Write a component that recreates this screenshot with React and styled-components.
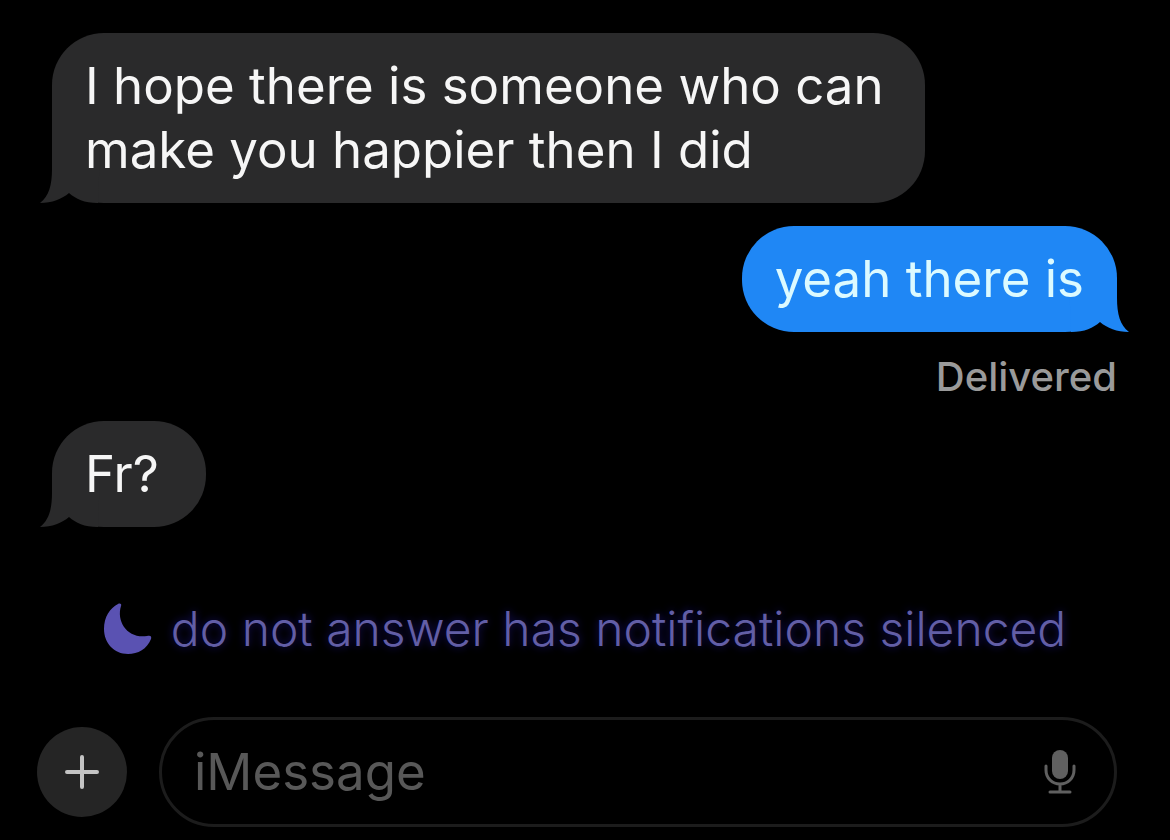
import styled, { createGlobalStyle } from 'styled-components'
import { useState } from 'react'

const GlobalStyle = createGlobalStyle`
  * {
    box-sizing: border-box;
  }

  body {
    margin: 0;
    background-color: #000;
    font-family: Inter, "Liberation Sans", sans-serif;
  }
`

const Screen = styled.main`
  display: flex;
  flex-direction: column;
  padding: 33px 53px 14px 52px;
`

const Thread = styled.div`
  display: flex;
  flex-direction: column;
  align-items: flex-start;
`

const Bubble = styled.p`
  position: relative;
  min-width: 154px;
  max-width: 82%;
  margin: 0;
  padding: 21px 33px;
  border-radius: 52px;
  align-self: ${({ $sent }) => ($sent ? 'flex-end' : 'flex-start')};
  background-color: ${({ $sent }) => ($sent ? '#1f87f5' : '#2a2a2b')};
  color: ${({ $sent }) => ($sent ? '#dcfaff' : '#f6f6f6')};
  font-size: 51px;
  line-height: 64px;

  & + & {
    margin-top: 23px;
  }
`

// The tail hangs over the bottom corner, mirrored for sent messages
const Tail = styled.svg`
  position: absolute;
  bottom: 0;
  ${({ $sent }) => ($sent ? 'right: -12px;' : 'left: -12px;')}
  width: 60px;
  height: 60px;
  fill: ${({ $sent }) => ($sent ? '#1f87f5' : '#2a2a2b')};
`

const Words = styled.span`
  position: relative;
  z-index: 1;
`

const Receipt = styled.small`
  align-self: flex-end;
  margin: 23px 0 22px;
  color: #9a9a9a;
  font-size: 40px;
  font-weight: 500;
  line-height: 44px;
`

const Status = styled.p`
  display: flex;
  align-items: center;
  justify-content: center;
  gap: 18px;
  margin: 74px 0 60px;
  color: #625ea6;
  font-size: 48px;
  font-weight: 300;
  line-height: 56px;
  white-space: nowrap;
  text-shadow: 0 0 8px #16106a;

  svg {
    flex: none;
    width: 50px;
    height: 52px;
    fill: #5a52b2;
  }
`

const Composer = styled.form`
  display: flex;
  align-items: center;
  gap: 32px;
  margin-left: -15px;
`

const AddButton = styled.button`
  display: flex;
  align-items: center;
  justify-content: center;
  flex: none;
  width: 90px;
  height: 90px;
  padding: 0;
  border: none;
  border-radius: 50%;
  background-color: #252525;
  cursor: pointer;
`

const Field = styled.div`
  display: flex;
  align-items: center;
  flex: 1;
  height: 110px;
  padding: 0 38px 0 32px;
  border: 3px solid #1c1c1c;
  border-radius: 55px;
`

const MessageInput = styled.input`
  flex: 1;
  min-width: 0;
  padding: 0;
  border: none;
  outline: none;
  background: transparent;
  color: #f6f6f6;
  font-family: inherit;
  font-size: 51px;
  line-height: 64px;

  &::placeholder {
    color: #585858;
    opacity: 1;
  }
`

const MicButton = styled.button`
  display: flex;
  padding: 0;
  border: none;
  background: none;
  cursor: pointer;
`

const Message = ({ sent, children }) => (
  <Bubble $sent={sent}>
    <Tail $sent={sent} viewBox="0 0 60 60" aria-hidden="true">
      <path
        transform={sent ? 'matrix(-1 0 0 1 60 0)' : undefined}
        d="M12 6V26C12 42 9 53 0 60C12 60 22 56 29 50C36 56 44 60 58 60L60 6Z"
      />
    </Tail>
    <Words>{children}</Words>
  </Bubble>
)

const App = () => {
  const [draft, setDraft] = useState('')

  const handleSubmit = (event) => {
    event.preventDefault()
    setDraft('')
  }

  return (
    <>
      <GlobalStyle />
      <Screen>
        <Thread>
          <Message>I hope there is someone who can make you happier then I did</Message>
          <Message sent>yeah there is</Message>
          <Receipt>Delivered</Receipt>
          <Message>Fr?</Message>
        </Thread>
        <Status>
          <svg viewBox="0 0 50 52" aria-hidden="true">
            <path d="M15 1C17 0 19 1 18 3C13 19 25 36 44 33C47 32 49 33 48 36C44 46 35 51 25 51C11 51 1 40 1 26C1 14 7 5 15 1Z" />
          </svg>
          do not answer has notifications silenced
        </Status>
        <Composer onSubmit={handleSubmit}>
          <AddButton type="button" aria-label="Add attachment">
            <svg width="36" height="36" viewBox="0 0 36 36" fill="none" stroke="#c4c4c4" strokeWidth="4" strokeLinecap="round">
              <path d="M18 3V33M3 18H33" />
            </svg>
          </AddButton>
          <Field>
            <MessageInput
              type="text"
              aria-label="Message"
              placeholder="iMessage"
              value={draft}
              onChange={({ target }) => setDraft(target.value)}
            />
            <MicButton type="button" aria-label="Dictate">
              <svg width="32" height="46" viewBox="0 0 32 46" fill="none" stroke="#606060" strokeWidth="3" strokeLinecap="round">
                <rect x="8" y="1" width="16" height="29" rx="8" fill="#606060" stroke="none" />
                <path d="M2 17V21C2 29 8 35 16 35S30 29 30 21V17M16 35V43M6 43H26" />
              </svg>
            </MicButton>
          </Field>
        </Composer>
      </Screen>
    </>
  )
}

export default App
